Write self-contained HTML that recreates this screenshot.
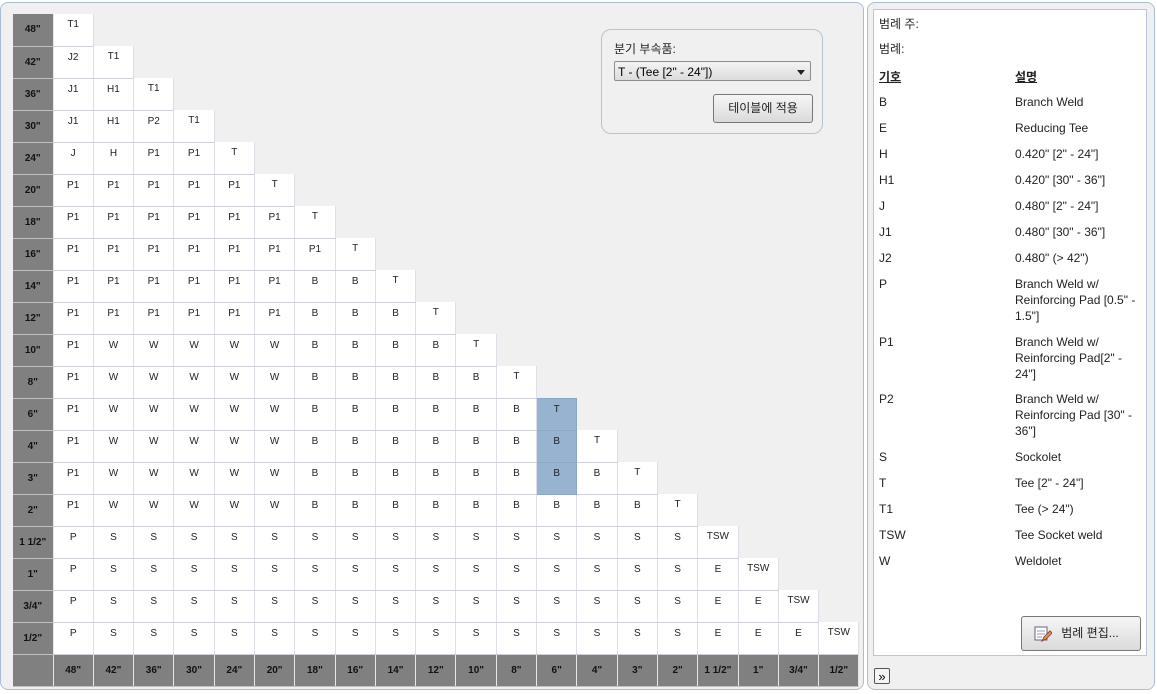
<!DOCTYPE html>
<html><head><meta charset="utf-8"><style>
body{margin:0;width:1157px;height:694px;background:#fff;font-family:"Liberation Sans","Noto Sans CJK KR",sans-serif;position:relative;overflow:hidden}
.lp{position:absolute;left:0;top:2px;width:862px;height:686px;border:1px solid #a9bdd6;border-radius:8px;background:#f0f0f0}
.rp{position:absolute;left:867px;top:2px;width:286px;height:686px;border:1px solid #a9bdd6;border-radius:8px;background:#f0f0f0}
table{position:absolute;left:13px;top:14px;border-collapse:collapse;table-layout:fixed}
td,th{width:40.3px;height:32px;padding:0;box-sizing:border-box;font-size:10px;text-align:center}
th:first-child{width:40px}
td{vertical-align:top;padding-top:5px;color:#222}
td.c{background:#fff;border-right:1px solid #dcdfe5;border-bottom:1px solid #cfd2d8}
td.h{background:#98b3d0;border:1px solid #8aa6c8}
th{background:#808080;color:#111;font-weight:bold;border-right:1px solid #e6e6e6;border-bottom:1px solid #c0c0c0;vertical-align:middle}
.grp{position:absolute;left:601px;top:29px;width:220px;height:103px;border:1px solid #b6c3d2;border-radius:10px;background:#f0f0f0}
.lbl{position:absolute;left:12px;top:10px;font-size:12px;color:#222}
.sel{position:absolute;left:12px;top:31px;width:197px;height:20px;border:1px solid #8d8d8d;border-radius:2px;background:linear-gradient(#f4f4f4,#dcdcdc);font-size:12px;line-height:20px;padding-left:3px;box-sizing:border-box}
.sel:after{content:"";position:absolute;right:5px;top:8px;border:4px solid transparent;border-top:5px solid #222}
.btn{position:absolute;border:1px solid #777;border-radius:3px;background:linear-gradient(#f6f6f6,#dadada);font-size:12px;text-align:center;box-sizing:border-box;color:#222}
.wb{position:absolute;left:873px;top:9px;width:274px;height:647px;background:#fff;border:1px solid #b9c6d6;box-sizing:border-box}
.l{position:absolute;font-size:12px;color:#222;line-height:16px}
</style></head><body>
<div class="lp"></div>
<table>
<tr><th>48"</th><td class="c">T1</td></tr>
<tr><th>42"</th><td class="c">J2</td><td class="c">T1</td></tr>
<tr><th>36"</th><td class="c">J1</td><td class="c">H1</td><td class="c">T1</td></tr>
<tr><th>30"</th><td class="c">J1</td><td class="c">H1</td><td class="c">P2</td><td class="c">T1</td></tr>
<tr><th>24"</th><td class="c">J</td><td class="c">H</td><td class="c">P1</td><td class="c">P1</td><td class="c">T</td></tr>
<tr><th>20"</th><td class="c">P1</td><td class="c">P1</td><td class="c">P1</td><td class="c">P1</td><td class="c">P1</td><td class="c">T</td></tr>
<tr><th>18"</th><td class="c">P1</td><td class="c">P1</td><td class="c">P1</td><td class="c">P1</td><td class="c">P1</td><td class="c">P1</td><td class="c">T</td></tr>
<tr><th>16"</th><td class="c">P1</td><td class="c">P1</td><td class="c">P1</td><td class="c">P1</td><td class="c">P1</td><td class="c">P1</td><td class="c">P1</td><td class="c">T</td></tr>
<tr><th>14"</th><td class="c">P1</td><td class="c">P1</td><td class="c">P1</td><td class="c">P1</td><td class="c">P1</td><td class="c">P1</td><td class="c">B</td><td class="c">B</td><td class="c">T</td></tr>
<tr><th>12"</th><td class="c">P1</td><td class="c">P1</td><td class="c">P1</td><td class="c">P1</td><td class="c">P1</td><td class="c">P1</td><td class="c">B</td><td class="c">B</td><td class="c">B</td><td class="c">T</td></tr>
<tr><th>10"</th><td class="c">P1</td><td class="c">W</td><td class="c">W</td><td class="c">W</td><td class="c">W</td><td class="c">W</td><td class="c">B</td><td class="c">B</td><td class="c">B</td><td class="c">B</td><td class="c">T</td></tr>
<tr><th>8"</th><td class="c">P1</td><td class="c">W</td><td class="c">W</td><td class="c">W</td><td class="c">W</td><td class="c">W</td><td class="c">B</td><td class="c">B</td><td class="c">B</td><td class="c">B</td><td class="c">B</td><td class="c">T</td></tr>
<tr><th>6"</th><td class="c">P1</td><td class="c">W</td><td class="c">W</td><td class="c">W</td><td class="c">W</td><td class="c">W</td><td class="c">B</td><td class="c">B</td><td class="c">B</td><td class="c">B</td><td class="c">B</td><td class="c">B</td><td class="h">T</td></tr>
<tr><th>4"</th><td class="c">P1</td><td class="c">W</td><td class="c">W</td><td class="c">W</td><td class="c">W</td><td class="c">W</td><td class="c">B</td><td class="c">B</td><td class="c">B</td><td class="c">B</td><td class="c">B</td><td class="c">B</td><td class="h">B</td><td class="c">T</td></tr>
<tr><th>3"</th><td class="c">P1</td><td class="c">W</td><td class="c">W</td><td class="c">W</td><td class="c">W</td><td class="c">W</td><td class="c">B</td><td class="c">B</td><td class="c">B</td><td class="c">B</td><td class="c">B</td><td class="c">B</td><td class="h">B</td><td class="c">B</td><td class="c">T</td></tr>
<tr><th>2"</th><td class="c">P1</td><td class="c">W</td><td class="c">W</td><td class="c">W</td><td class="c">W</td><td class="c">W</td><td class="c">B</td><td class="c">B</td><td class="c">B</td><td class="c">B</td><td class="c">B</td><td class="c">B</td><td class="c">B</td><td class="c">B</td><td class="c">B</td><td class="c">T</td></tr>
<tr><th>1 1/2"</th><td class="c">P</td><td class="c">S</td><td class="c">S</td><td class="c">S</td><td class="c">S</td><td class="c">S</td><td class="c">S</td><td class="c">S</td><td class="c">S</td><td class="c">S</td><td class="c">S</td><td class="c">S</td><td class="c">S</td><td class="c">S</td><td class="c">S</td><td class="c">S</td><td class="c">TSW</td></tr>
<tr><th>1"</th><td class="c">P</td><td class="c">S</td><td class="c">S</td><td class="c">S</td><td class="c">S</td><td class="c">S</td><td class="c">S</td><td class="c">S</td><td class="c">S</td><td class="c">S</td><td class="c">S</td><td class="c">S</td><td class="c">S</td><td class="c">S</td><td class="c">S</td><td class="c">S</td><td class="c">E</td><td class="c">TSW</td></tr>
<tr><th>3/4"</th><td class="c">P</td><td class="c">S</td><td class="c">S</td><td class="c">S</td><td class="c">S</td><td class="c">S</td><td class="c">S</td><td class="c">S</td><td class="c">S</td><td class="c">S</td><td class="c">S</td><td class="c">S</td><td class="c">S</td><td class="c">S</td><td class="c">S</td><td class="c">S</td><td class="c">E</td><td class="c">E</td><td class="c">TSW</td></tr>
<tr><th>1/2"</th><td class="c">P</td><td class="c">S</td><td class="c">S</td><td class="c">S</td><td class="c">S</td><td class="c">S</td><td class="c">S</td><td class="c">S</td><td class="c">S</td><td class="c">S</td><td class="c">S</td><td class="c">S</td><td class="c">S</td><td class="c">S</td><td class="c">S</td><td class="c">S</td><td class="c">E</td><td class="c">E</td><td class="c">E</td><td class="c">TSW</td></tr>
<tr><th></th><th>48"</th><th>42"</th><th>36"</th><th>30"</th><th>24"</th><th>20"</th><th>18"</th><th>16"</th><th>14"</th><th>12"</th><th>10"</th><th>8"</th><th>6"</th><th>4"</th><th>3"</th><th>2"</th><th>1 1/2"</th><th>1"</th><th>3/4"</th><th>1/2"</th></tr>
</table>
<div class="grp"><div class="lbl">분기 부속품:</div><div class="sel">T - (Tee [2" - 24"])</div><div class="btn" style="left:111px;top:64px;width:100px;height:29px;line-height:27px">테이블에 적용</div></div>
<div class="rp"></div>
<div class="wb"></div>
<div class="l" style="left:879px;top:16px">범례 주:</div>
<div class="l" style="left:879px;top:41px">범례:</div>
<div class="l" style="left:879px;top:69px;font-weight:bold;text-decoration:underline">기호</div>
<div class="l" style="left:1015px;top:69px;font-weight:bold;text-decoration:underline">설명</div>
<div class="l" style="left:879px;top:94px">B</div><div class="l" style="left:1015px;top:94px">Branch Weld</div>
<div class="l" style="left:879px;top:120px">E</div><div class="l" style="left:1015px;top:120px">Reducing Tee</div>
<div class="l" style="left:879px;top:146px">H</div><div class="l" style="left:1015px;top:146px">0.420" [2" - 24"]</div>
<div class="l" style="left:879px;top:172px">H1</div><div class="l" style="left:1015px;top:172px">0.420" [30" - 36"]</div>
<div class="l" style="left:879px;top:198px">J</div><div class="l" style="left:1015px;top:198px">0.480" [2" - 24"]</div>
<div class="l" style="left:879px;top:224px">J1</div><div class="l" style="left:1015px;top:224px">0.480" [30" - 36"]</div>
<div class="l" style="left:879px;top:250px">J2</div><div class="l" style="left:1015px;top:250px">0.480" (&gt; 42")</div>
<div class="l" style="left:879px;top:276px">P</div><div class="l" style="left:1015px;top:276px;width:130px">Branch Weld w/<br>Reinforcing Pad [0.5" -<br>1.5"]</div>
<div class="l" style="left:879px;top:334px">P1</div><div class="l" style="left:1015px;top:334px;width:130px">Branch Weld w/<br>Reinforcing Pad[2" -<br>24"]</div>
<div class="l" style="left:879px;top:391px">P2</div><div class="l" style="left:1015px;top:391px;width:130px">Branch Weld w/<br>Reinforcing Pad [30" -<br>36"]</div>
<div class="l" style="left:879px;top:449px">S</div><div class="l" style="left:1015px;top:449px">Sockolet</div>
<div class="l" style="left:879px;top:475px">T</div><div class="l" style="left:1015px;top:475px">Tee [2" - 24"]</div>
<div class="l" style="left:879px;top:501px">T1</div><div class="l" style="left:1015px;top:501px">Tee (&gt; 24")</div>
<div class="l" style="left:879px;top:527px">TSW</div><div class="l" style="left:1015px;top:527px">Tee Socket weld</div>
<div class="l" style="left:879px;top:553px">W</div><div class="l" style="left:1015px;top:553px">Weldolet</div>
<div class="btn" style="left:1021px;top:616px;width:120px;height:35px;line-height:33px;padding-left:18px">범례 편집...
<svg style="position:absolute;left:12px;top:9px" width="18" height="17" viewBox="0 0 18 17"><rect x="1" y="1" width="12" height="13" fill="#fff" stroke="#667"/><path d="M3 5h8M3 8h8M3 11h5" stroke="#99a"/><path d="M8 15l2-4 6-6 2 2-6 6z" fill="#e8a030" stroke="#845"/></svg></div>
<div style="position:absolute;left:874px;top:668px;width:16px;height:16px;border:1px solid #555;border-radius:2px;background:#f4f4f4;font-size:13px;line-height:15px;text-align:center;box-sizing:border-box">»</div>
</body></html>
